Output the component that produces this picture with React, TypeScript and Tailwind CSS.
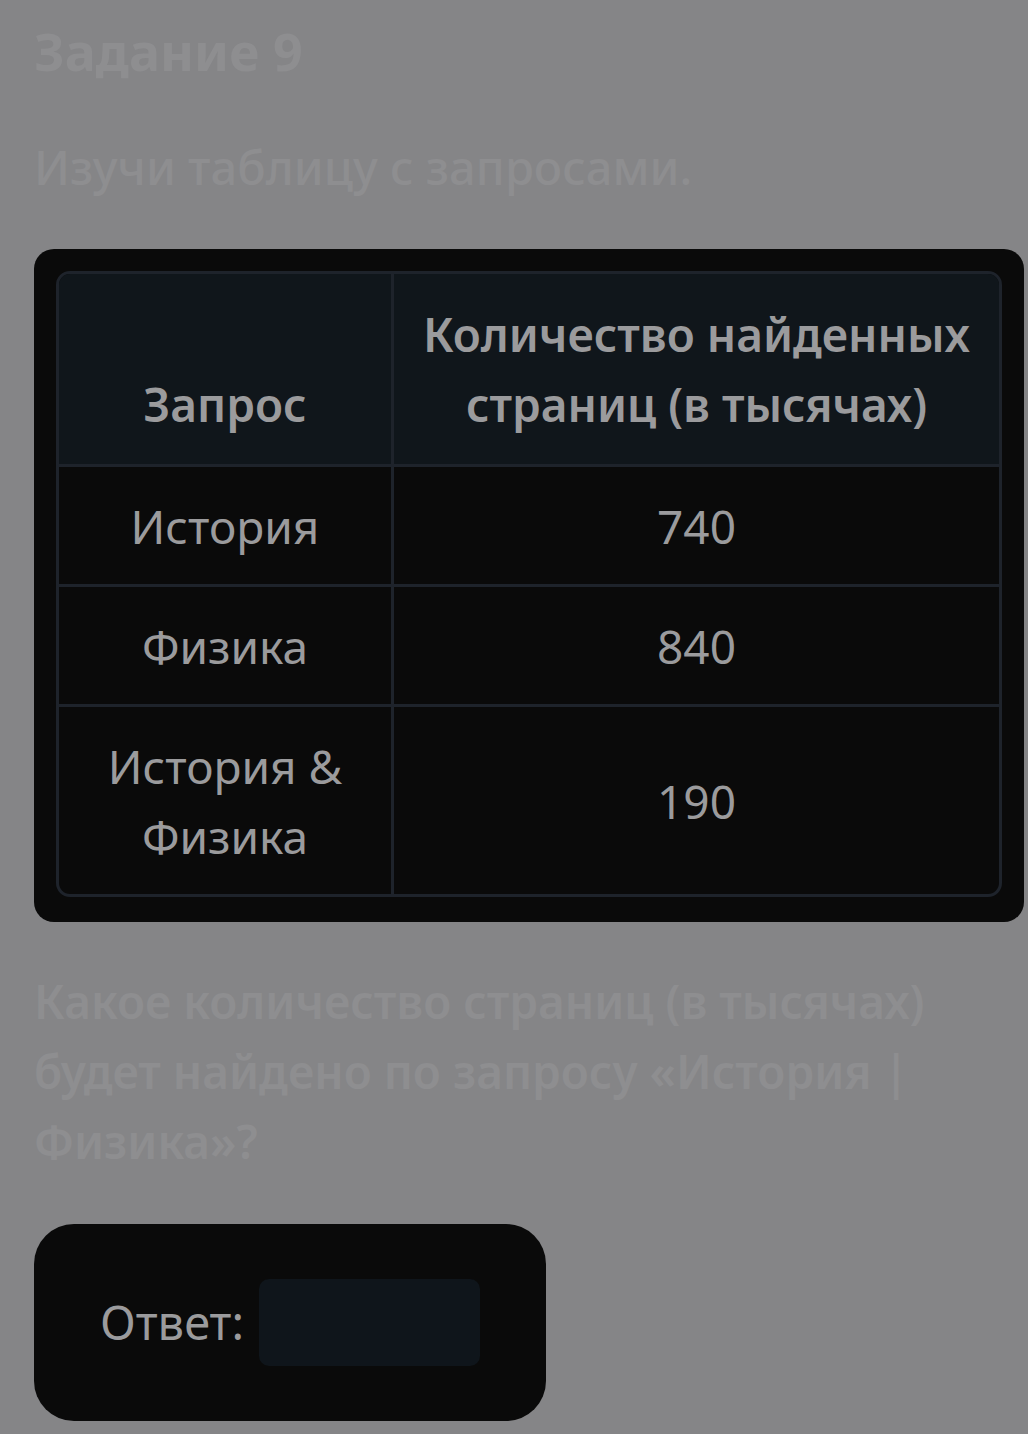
import React from "react";

const font = { fontFamily: '"Noto Sans", "Open Sans", sans-serif' };

export default function App() {
  const rows = [
    { q: "История", n: "740" },
    { q: "Физика", n: "840" },
    { q: "История & Физика", n: "190" },
  ];
  return (
    <div className="min-h-[1434px] w-[1028px] bg-[#858587] overflow-hidden" style={font}>
      <div className="pl-[34px] pr-[4px] pt-[14px]">
        <h1 className="text-[52px] leading-[74px] font-bold text-[#8e8e90]">Задание 9</h1>
        <p className="mt-[44px] text-[47px] leading-[70px] font-medium text-[#8e8e90]">Изучи таблицу с запросами.</p>
        <div className="mt-[47px] rounded-[20px] bg-[#0a0a0a] px-[22px] pt-[22px] pb-[25px]">
          <div className="rounded-[14px] border-[3px] border-[#1e232b] overflow-hidden">
            <div className="grid grid-cols-[335px_1fr] bg-[#10161b] text-[#9b9b9d] font-semibold text-[46px] leading-[70px] text-center">
              <div className="flex items-end justify-center px-4 pb-[25px] pt-[25px] border-r-[3px] border-[#1e232b]">Запрос</div>
              <div className="px-2 py-[25px]">Количество найденных страниц (в тысячах)</div>
            </div>
            {rows.map((r) => (
              <div key={r.n} className="grid grid-cols-[335px_1fr] border-t-[3px] border-[#1e232b] text-[#9b9b9d] text-[46px] leading-[70px] text-center">
                <div className="px-[30px] pt-[24px] pb-[23px] border-r-[3px] border-[#1e232b]">{r.q}</div>
                <div className="flex items-center justify-center pt-[24px] pb-[23px]">{r.n}</div>
              </div>
            ))}
          </div>
        </div>
        <p className="mt-[44px] w-[960px] text-[46px] leading-[70px] font-semibold text-[#8e8e90]">
          Какое количество страниц (в тысячах) будет найдено по запросу «История | Физика»?
        </p>
        <div className="mt-[48px] w-[512px] h-[197px] rounded-[40px] bg-[#0a0a0a] flex items-center pl-[66px]">
          <span className="text-[47px] text-[#9b9b9d] mr-[15px]">Ответ:</span>
          <div className="w-[221px] h-[87px] rounded-[10px] bg-[#0f151b]" />
        </div>
      </div>
    </div>
  );
}
